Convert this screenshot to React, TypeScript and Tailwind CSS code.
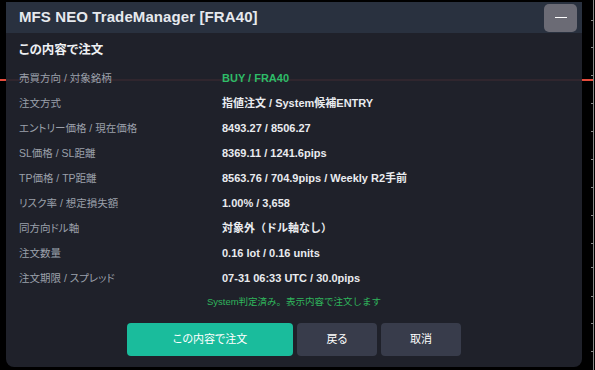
const rows: { label: string; value: string; green?: boolean }[] = [
  { label: '売買方向 / 対象銘柄', value: 'BUY / FRA40', green: true },
  { label: '注文方式', value: '指値注文 / System候補ENTRY' },
  { label: 'エントリー価格 / 現在価格', value: '8493.27 / 8506.27' },
  { label: 'SL価格 / SL距離', value: '8369.11 / 1241.6pips' },
  { label: 'TP価格 / TP距離', value: '8563.76 / 704.9pips / Weekly R2手前' },
  { label: 'リスク率 / 想定損失額', value: '1.00% / 3,658' },
  { label: '同方向ドル軸', value: '対象外（ドル軸なし）' },
  { label: '注文数量', value: '0.16 lot / 0.16 units' },
  { label: '注文期限 / スプレッド', value: '07-31 06:33 UTC / 30.0pips' },
];

const ticks = [20, 47, 75, 103, 131, 159, 187, 215, 243, 267, 296, 323, 351];

export default function App() {
  return (
    <div
      className="relative w-[595px] h-[370px] overflow-hidden bg-black"
      style={{ fontFamily: '"Liberation Sans", Arial, "Noto Sans CJK JP", sans-serif' }}
    >
      {/* chart behind the dialog */}
      <div className="absolute left-0 top-[79px] w-[593px] h-[2px] bg-[#e74c3c]" />
      <svg className="absolute left-[591px] top-0" width="4" height="370">
        <line x1="2.5" y1="0" x2="2.5" y2="370" stroke="#8a8a8a" strokeWidth="1" />
        {ticks.map((t) => (
          <line key={t} x1="0" y1={t + 0.5} x2="2.5" y2={t + 0.5} stroke="#8a8a8a" strokeWidth="1" />
        ))}
      </svg>

      {/* dialog */}
      <div className="relative z-10 ml-[6px] mt-[2px] w-[576px] rounded-b-lg overflow-hidden bg-[rgba(33,35,45,0.93)]">
        {/* Header */}
        <div className="flex h-[31px] items-center justify-between bg-[#29313f] pl-[13px] pr-[5px]">
          <h1 className="text-[15px] font-bold text-[#e6e9ee] tracking-[0.1px]">MFS NEO TradeManager [FRA40]</h1>
          <button className="flex h-[28px] w-[33px] items-center justify-center rounded-[5px] bg-[#6b6b75]">
            <span className="block h-[1.5px] w-[12px] bg-white" />
          </button>
        </div>

        {/* Body */}
        <div className="px-[13px] pt-[7px] pb-[11px]">
          <h2 className="h-[20px] text-[12.5px] leading-[20px] font-bold text-[#eef0f3] [font-feature-settings:'palt']">
            この内容で注文
          </h2>

          <div className="mt-[6px]">
            {rows.map((row) => (
              <div key={row.label} className="flex h-[25px] items-center">
                <span className="w-[203px] text-[10.5px] text-[#9ba0aa] [font-feature-settings:'palt']">{row.label}</span>
                <span className={`text-[11px] font-bold ${row.green ? 'text-[#2ebc68]' : 'text-[#e9ebef]'}`}>
                  {row.value}
                </span>
              </div>
            ))}
          </div>

          <p className="mt-[3px] h-[16px] text-center text-[9.5px] leading-[16px] text-[#2fb55c]">
            System判定済み。表示内容で注文します
          </p>

          {/* Actions */}
          <div className="mt-[13px] flex justify-center gap-[4px] text-[11px] text-white [font-feature-settings:'palt']">
            <button className="h-[33px] w-[166px] rounded-[4px] bg-[#1abc9c]">この内容で注文</button>
            <button className="h-[33px] w-[80px] rounded-[4px] bg-[#383c4b]">戻る</button>
            <button className="h-[33px] w-[80px] rounded-[4px] bg-[#383c4b]">取消</button>
          </div>
        </div>
      </div>
    </div>
  );
}
